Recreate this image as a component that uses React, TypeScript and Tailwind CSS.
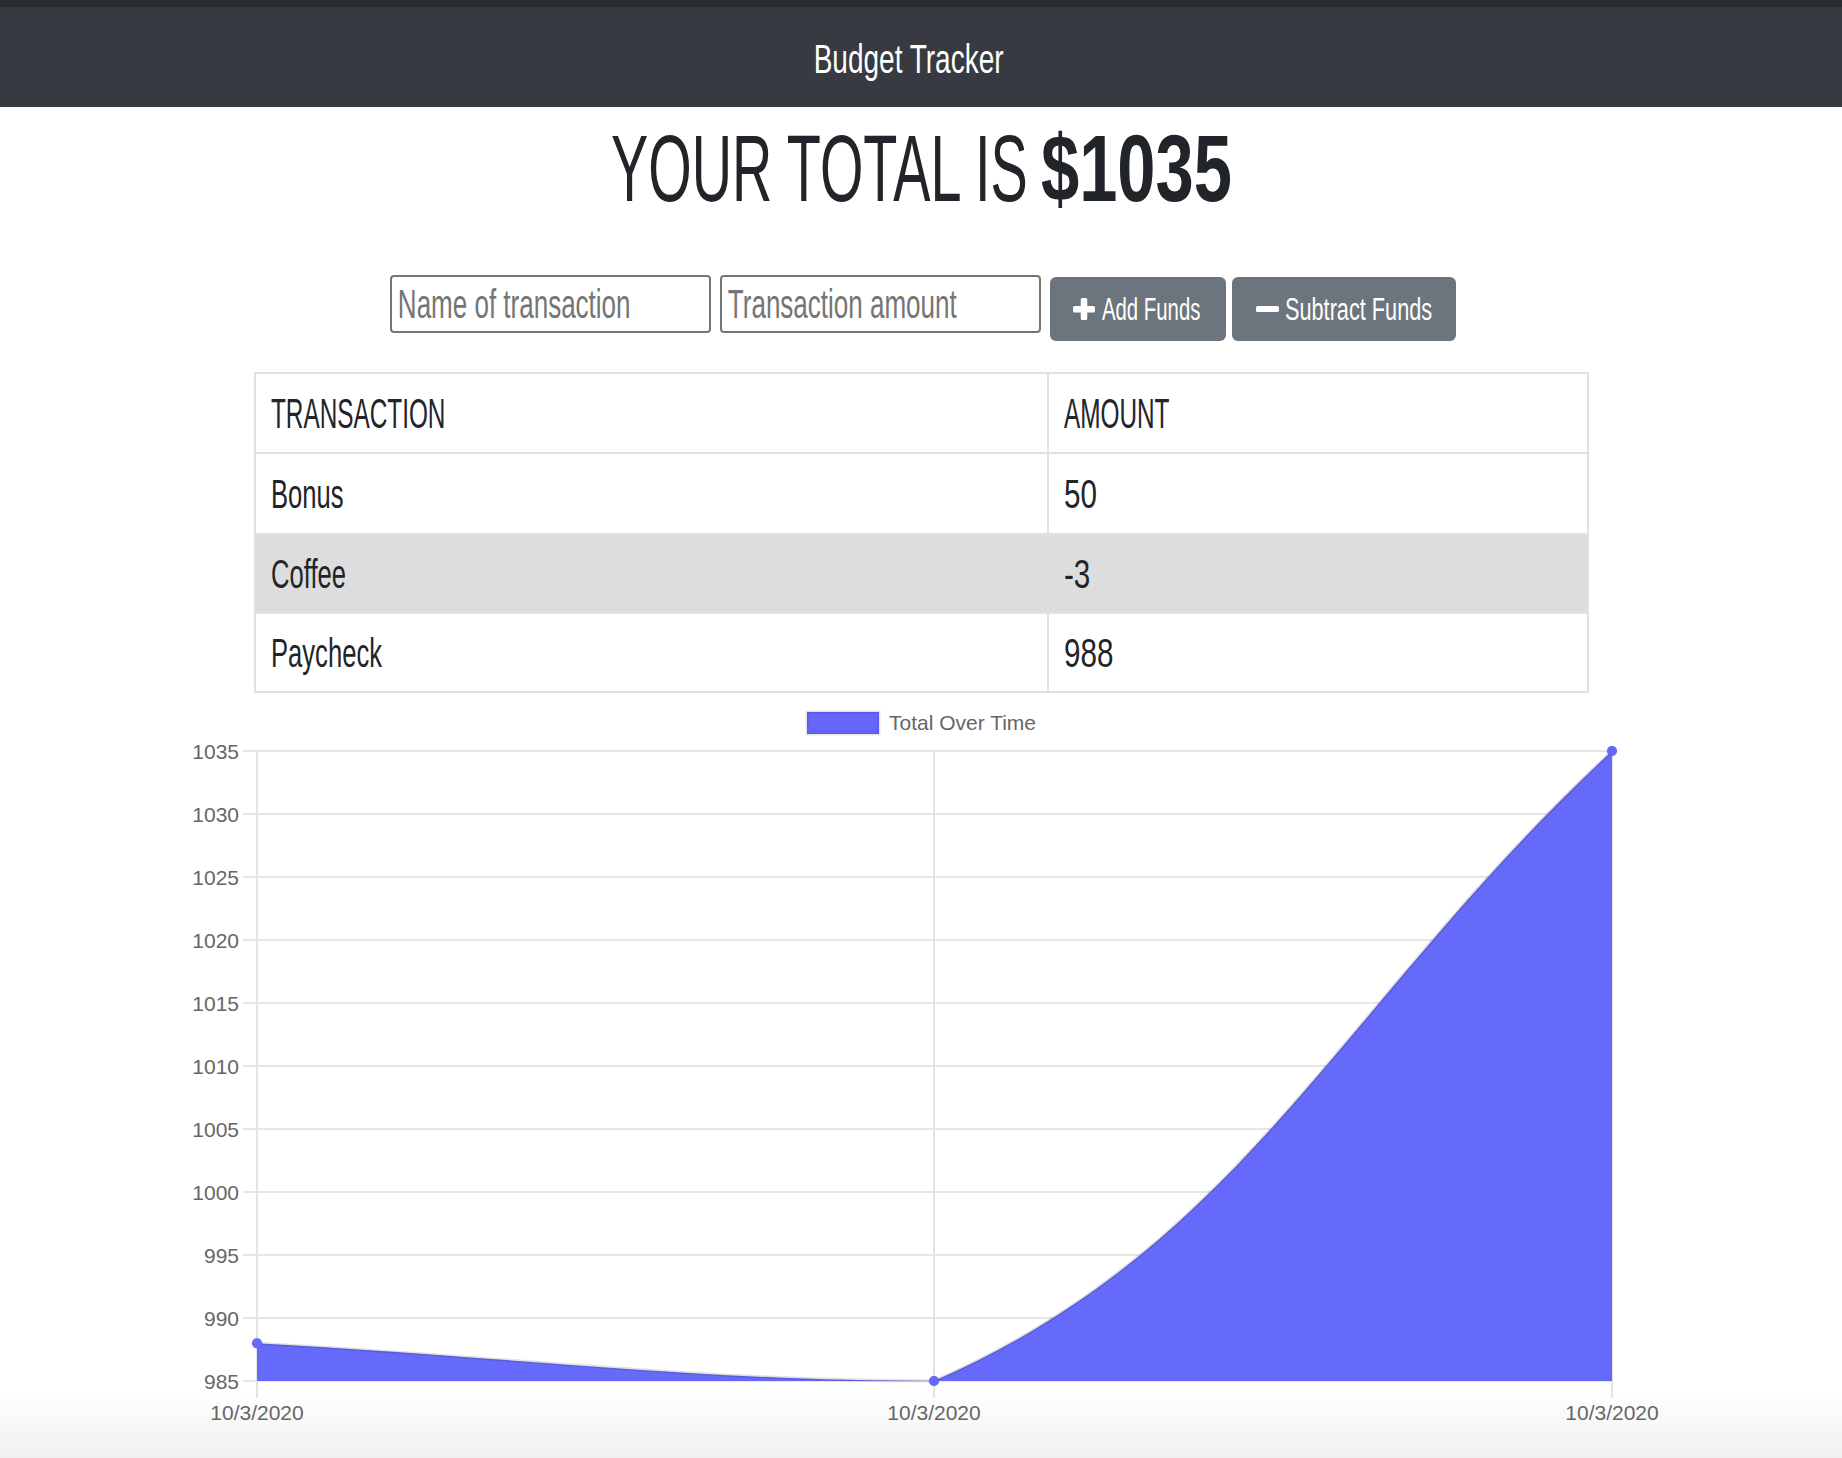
const ROWS = [
  { name: 'Bonus', value: '50', striped: false },
  { name: 'Coffee', value: '-3', striped: true },
  { name: 'Paycheck', value: '988', striped: false },
];

// chart geometry, in svg coords (svg sits at page y=700)
const TOP = 51;
const STEP = 63;
const BOTTOM = TOP + STEP * 10;
const X0 = 257;
const X1 = 934;
const X2 = 1612;
const TICKS = [1035, 1030, 1025, 1020, 1015, 1010, 1005, 1000, 995, 990, 985];
const y = (v: number) => TOP + (1035 - v) * (STEP / 5);

const CURVE = `M${X0},${y(988)} C527.8,${y(986.8)} 705,${BOTTOM} ${X1},${BOTTOM} C1246.7,${y(995.85)} 1340.8,${y(1015)} ${X2},${y(1035)}`;

function Chart() {
  const font = "'Liberation Sans', Arial, sans-serif";
  return (
    <svg width="1842" height="740" className="block" fontFamily={font}>
      {/* legend */}
      <rect x="807" y="12" width="72" height="22" fill="#6666ff" stroke="rgba(0,0,0,0.1)" strokeWidth="3" />
      <text x="889" y="29.5" fontSize="21" fill="#666">
        Total Over Time
      </text>

      {/* horizontal grid + y labels */}
      {TICKS.map((t) => (
        <g key={t}>
          <line x1="243" x2={X2} y1={y(t)} y2={y(t)} stroke="#e6e6e6" strokeWidth="2" />
          <text x="239" y={y(t) + 7.5} fontSize="21" fill="#666" textAnchor="end">
            {t}
          </text>
        </g>
      ))}

      {/* vertical grid + x labels */}
      {[X0, X1, X2].map((x) => (
        <g key={x}>
          <line x1={x} x2={x} y1={TOP} y2={BOTTOM + 17} stroke="#e3e3e3" strokeWidth="2" />
          <text x={x} y="719.5" fontSize="21" fill="#666" textAnchor="middle">
            10/3/2020
          </text>
        </g>
      ))}

      {/* area */}
      <path d={`${CURVE} L${X2},${BOTTOM} L${X0},${BOTTOM} Z`} fill="#666afa" />
      <path d={CURVE} fill="none" stroke="rgba(0,0,0,0.12)" strokeWidth="3" />
      {[
        [X0, y(988)],
        [X1, y(985)],
        [X2, y(1035)],
      ].map(([cx, cy]) => (
        <circle key={cx} cx={cx} cy={cy} r="5" fill="#666afa" stroke="rgba(0,0,0,0.1)" strokeWidth="1" />
      ))}
    </svg>
  );
}

function PlusIcon() {
  return (
    <svg width="22" height="22" viewBox="0 0 22 22" className="shrink-0">
      <rect x="0" y="8" width="22" height="6.5" rx="1.5" fill="currentColor" />
      <rect x="7.75" y="0" width="6.5" height="22" rx="1.5" fill="currentColor" />
    </svg>
  );
}

function MinusIcon() {
  return (
    <svg width="23" height="22" viewBox="0 0 23 22" className="shrink-0">
      <rect x="0" y="8" width="23" height="6" rx="1.5" fill="currentColor" />
    </svg>
  );
}

export default function App() {
  return (
    <div className="min-h-[1458px] bg-[linear-gradient(180deg,#ffffff_1392px,#f0f0f0_1458px)] font-['Liberation_Sans',Arial,sans-serif] text-[#212529]">
      {/* Navbar */}
      <header className="flex h-[107px] items-center justify-center border-t-[7px] border-[#2b2c30] bg-[#373a40] pr-[24px] pt-[3px]">
        <span className="inline-block scale-x-[0.7] whitespace-nowrap text-[40px] leading-none text-white">
          Budget Tracker
        </span>
      </header>

      {/* Total */}
      <div className="mt-[15px] flex h-[94px] justify-center gap-[19px] text-[94px] leading-none">
        <span className="w-[411px] whitespace-nowrap">
          <span className="inline-block origin-left scale-x-[0.594] font-light">YOUR TOTAL IS</span>
        </span>
        <span className="w-[190px] whitespace-nowrap">
          <span className="inline-block origin-left scale-x-[0.73] font-bold">$1035</span>
        </span>
      </div>

      {/* Form */}
      <div className="mt-[59px] flex items-start justify-center gap-[9px] pl-[4px]">
        <label className="block h-[58px] w-[321px] overflow-hidden rounded-[4px] border-2 border-[#767676]">
          <input
            type="text"
            placeholder="Name of transaction"
            className="h-full w-[490px] origin-left scale-x-[0.65] px-[9px] text-[40px] outline-none placeholder:text-[#757575]"
          />
        </label>
        <label className="block h-[58px] w-[321px] overflow-hidden rounded-[4px] border-2 border-[#767676]">
          <input
            type="number"
            placeholder="Transaction amount"
            className="h-full w-[490px] origin-left scale-x-[0.65] px-[9px] text-[40px] outline-none placeholder:text-[#757575]"
          />
        </label>
        <div className="mt-[2px] flex gap-[6px]">
          <button className="flex h-[64px] w-[176px] items-center rounded-[6px] bg-[#6c757d] pl-[23px] text-white">
            <PlusIcon />
            <span className="ml-[7px] inline-block origin-left scale-x-[0.656] whitespace-nowrap text-[31px] leading-none">
              Add Funds
            </span>
          </button>
          <button className="flex h-[64px] w-[224px] items-center rounded-[6px] bg-[#6c757d] pl-[24px] text-white">
            <MinusIcon />
            <span className="ml-[6px] inline-block origin-left scale-x-[0.7] whitespace-nowrap text-[31px] leading-none">
              Subtract Funds
            </span>
          </button>
        </div>
      </div>

      {/* Transactions */}
      <div className="mx-auto mt-[31px] w-[1335px] border-2 border-[#dee2e6]">
        <div className="flex h-[80px] border-b-2 border-[#dee2e6]">
          <div className="flex w-[793px] items-center border-r-2 border-[#dee2e6] pl-[15px]">
            <span className="inline-block origin-left scale-x-[0.566] text-[43px] leading-none">TRANSACTION</span>
          </div>
          <div className="flex flex-1 items-center pl-[15px]">
            <span className="inline-block origin-left scale-x-[0.566] text-[43px] leading-none">AMOUNT</span>
          </div>
        </div>
        {ROWS.map((r, i) => (
          <div
            key={r.name}
            className={`flex h-[79px] ${i > 0 ? 'border-t-2 border-[#dee2e6]' : ''} ${r.striped ? 'bg-[#dddddd]' : ''}`}
          >
            <div className="flex w-[793px] items-center border-r-2 border-[#dee2e6] pl-[15px]">
              <span className="inline-block origin-left scale-x-[0.64] text-[40px] leading-none">{r.name}</span>
            </div>
            <div className="flex flex-1 items-center pl-[15px]">
              <span className="inline-block origin-left scale-x-[0.74] text-[40px] leading-none">{r.value}</span>
            </div>
          </div>
        ))}
      </div>

      {/* Chart */}
      <div className="mt-[7px]">
        <Chart />
      </div>
    </div>
  );
}
